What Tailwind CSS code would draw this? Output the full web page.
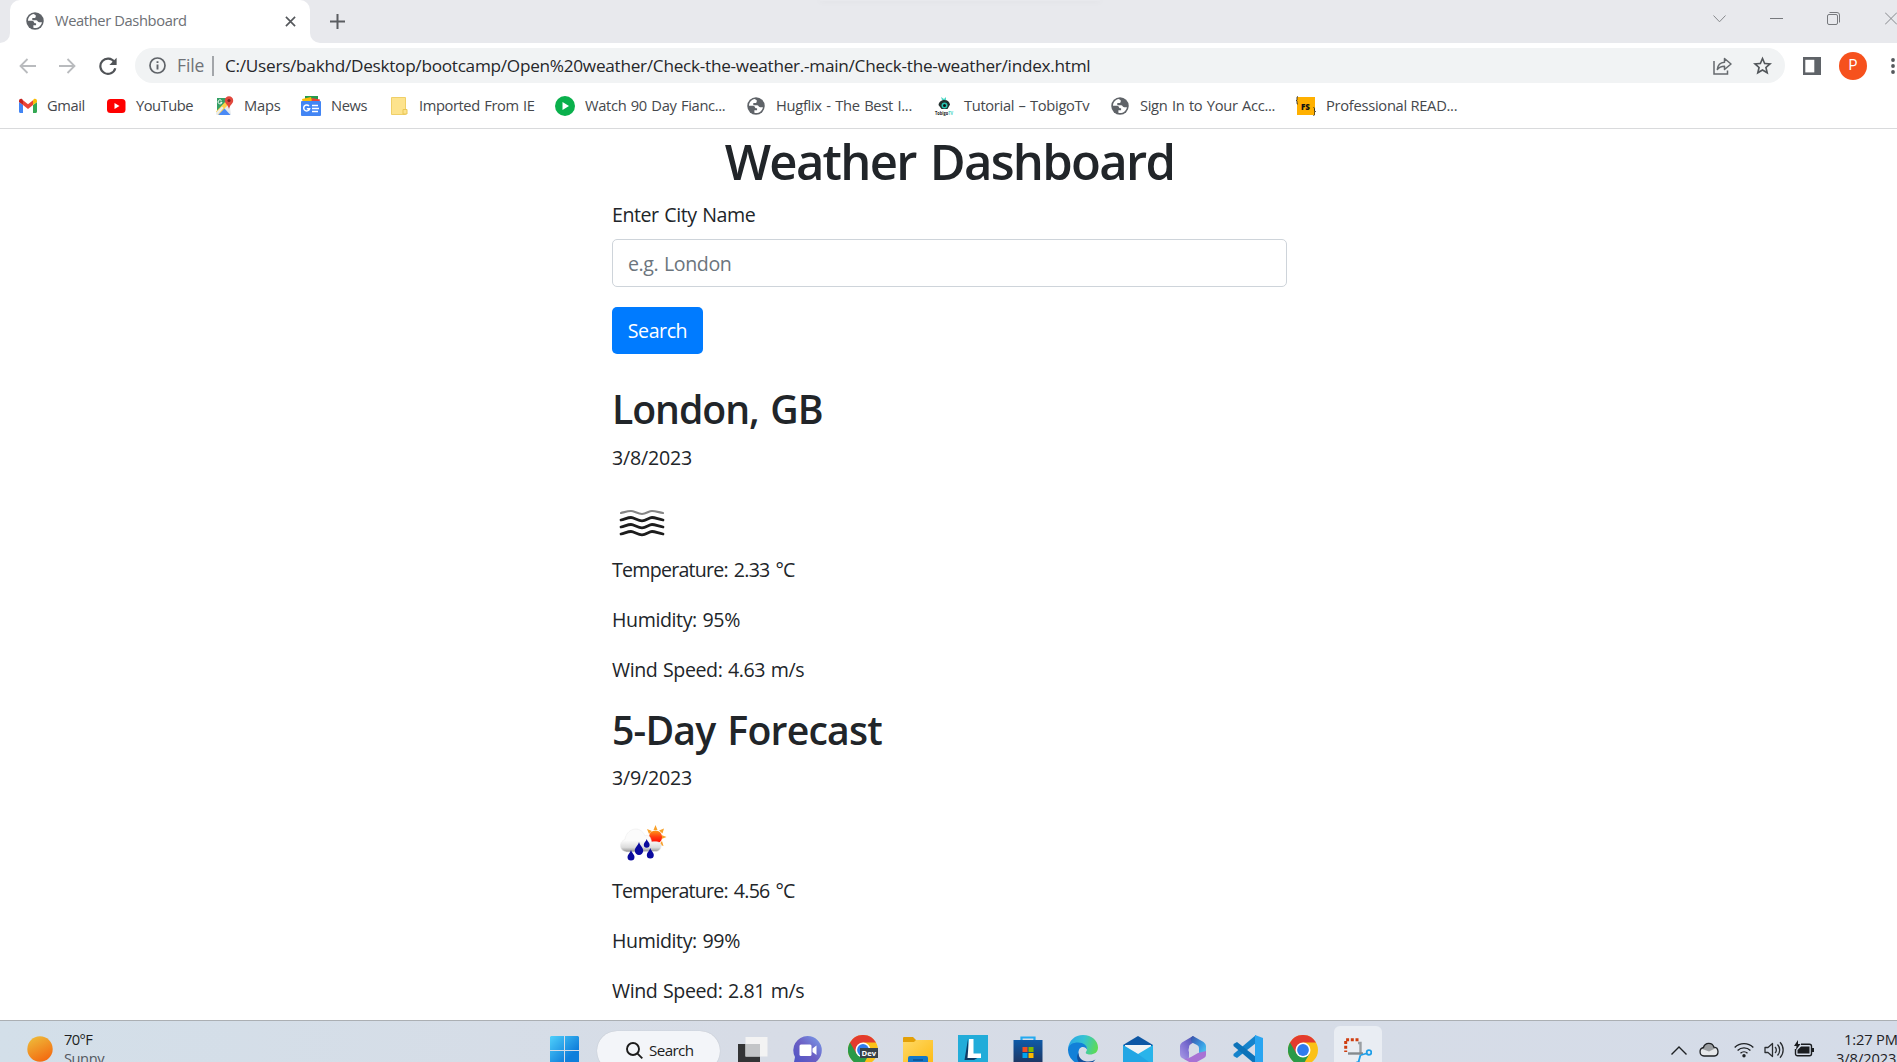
<!DOCTYPE html>
<html lang="en">
<head>
<meta charset="utf-8">
<title>Weather Dashboard</title>
<script src="https://cdn.jsdelivr.net/npm/@tailwindcss/browser@4"></script>
</head>
<body class="w-[1897px] h-[1062px] overflow-hidden bg-white font-['Open_Sans','Noto_Sans',sans-serif] text-[#212529] flex flex-col whitespace-nowrap">

<svg class="hidden">
  <defs>
    <symbol id="globe" viewBox="0 0 20 20">
      <circle cx="10" cy="10" r="9.700" fill="#5f6368"/>
      <path d="M8.600 2.300C5 3 2.300 6 2.200 9.600h4.400c1.300 0 2.300.9 2.400 2.100.1.500.4.800.9.800h1.300v2.300H8.200v2.800c4.600 1 8.900-2 9.500-6.300H14.600c-.9 0-1.500-.5-1.800-1.300-.3-.7-.8-.9-1.500-.9H7V6.600h2.100c.9 0 1.600-.5 1.700-1.400V3.500z" fill="#fff"/>
    </symbol>
    <symbol id="chrome" viewBox="0 0 30 30">
      <circle cx="15" cy="15" r="15" fill="#fbc116"/>
      <path d="M15 15 2 7.500A15 15 0 0 0 15 30l6.500-11.200z" fill="#2a9a48"/>
      <path d="M2 7.500A15 15 0 0 1 28 7.500H15L8.500 18.700z" fill="#e33b2e"/>
      <circle cx="15" cy="15" r="7.500" fill="#fff"/>
      <circle cx="15" cy="15" r="5.900" fill="#2f7bed"/>
    </symbol>
  </defs>
</svg>

<header class="h-[129px] shrink-0 border-b border-[#d9dadc] flex flex-col">
  <!-- Tab strip -->
  <div class="relative h-[43px] bg-[#e8e9ed] flex items-start">
    <div class="absolute left-[820px] top-0 w-[280px] h-px shadow-[0_0_6px_1px_rgba(0,0,0,0.04)]"></div>
    <div class="w-[10px] h-[43px] bg-white"><div class="size-full bg-[#e8e9ed] rounded-br-[10px]"></div></div>
    <div class="w-[300px] h-[43px] bg-white rounded-t-[10px] flex items-center pl-4 pr-[14px] pb-[1px]">
      <svg class="size-[18px]"><use href="#globe"/></svg>
      <span class="ml-[11px] pb-[2px] grow text-[14.700px] tracking-[-0.375px] text-[#6d7075]">Weather Dashboard</span>
      <svg class="size-[11px]" viewBox="0 0 12 12" stroke="#55585c" stroke-width="1.800"><path d="M1 1l10 10M11 1L1 11"/></svg>
    </div>
    <div class="w-[10px] h-[43px] bg-white"><div class="size-full bg-[#e8e9ed] rounded-bl-[10px]"></div></div>
    <svg class="ml-[10px] mt-[14px] size-[15px]" viewBox="0 0 15 15" stroke="#5a5d61" stroke-width="2"><path d="M7.500 0v15M0 7.500h15"/></svg>
    <div class="ml-auto flex items-start">
      <svg class="mt-[15px] mr-[44px] w-[13px] h-2" viewBox="0 0 13 8" fill="none" stroke="#86888c"><path d="M.5.5l6 6.300 6-6.300"/></svg>
      <svg class="mt-[18px] mr-[44px] w-[13px] h-px" viewBox="0 0 13 1"><path d="M0 0h13v1H0z" fill="#77797d"/></svg>
      <svg class="mt-3 mr-[45px] size-[13px]" viewBox="0 0 13 13" fill="none" stroke="#77797d"><rect x=".5" y="2.500" width="10" height="10" rx="1.500"/><path d="M2.500.5h7.500a2.500 2.500 0 0 1 2.500 2.500v7.500"/></svg>
      <svg class="mt-3 w-3 h-[13px]" viewBox="0 0 12 13" stroke="#86888c"><path d="M0 .5l12 12M0 12.500l12-12"/></svg>
    </div>
  </div>

  <!-- Toolbar -->
  <div class="mt-[5px] h-[35px] flex items-center">
    <svg class="ml-[19px] w-[17px] h-4" viewBox="0 0 17 16" fill="none" stroke="#b9bbbe" stroke-width="1.800"><path d="M17 8H1.500M8.500 1L1.500 8l7 7"/></svg>
    <svg class="ml-[23px] w-[17px] h-4" viewBox="0 0 17 16" fill="none" stroke="#b9bbbe" stroke-width="1.800"><path d="M0 8h15.500M8.500 1l7 7-7 7"/></svg>
    <svg class="ml-[23px] size-[18px]" viewBox="0 0 18 18" fill="none" stroke="#505357" stroke-width="2.200"><path d="M15.300 5A7.600 7.600 0 1 0 16.300 11.200"/><path d="M17.600.8v7.200h-7.200z" fill="#505357" stroke="none"/></svg>
    <div class="ml-[18px] w-[1650px] h-[35px] rounded-full bg-[#f1f3f4] flex items-center">
      <svg class="ml-[14px] size-[17px]" viewBox="0 0 17 17" fill="none" stroke="#5f6368" stroke-width="1.700"><circle cx="8.500" cy="8.500" r="7.500"/><path d="M8.500 7.500v5M8.500 4.200v1.900" stroke-width="1.900"/></svg>
      <span class="ml-[11px] w-[35px] text-[17.500px] tracking-[-0.12px] text-[#6f7277]">File</span>
      <span class="w-[2px] h-[20px] bg-[#a3a6aa]"></span>
      <span class="ml-[11px] text-[17.200px] tracking-[-0.27px] text-[#26272a]">C:/Users/bakhd/Desktop/bootcamp/Open%20weather/Check-the-weather.-main/Check-the-weather/index.html</span>
      <svg class="ml-auto w-[19px] h-[18px]" viewBox="0 0 19 18" fill="none" stroke="#65696d" stroke-width="1.500"><path d="M1 4v13h13.500v-3.500"/><path d="M4.300 12.500c.4-4.500 3-7 7.200-7.300V1.500L18 7l-6.500 5.500V9.200c-3.200 0-5.500.9-7.200 3.300z" stroke-linejoin="round"/></svg>
      <svg class="ml-[21px] mr-[13px] size-[19px]" viewBox="0 0 24 24"><path fill="#53575b" d="M24 9.200l-8.600-.7L12 .5 8.600 8.500 0 9.200l6.500 5.700-2 8.400L12 18.900l7.500 4.400-2-8.400zM12 16.400l-4.300 2.600 1.100-4.900L5 10.800l5-.4 2-4.700 2 4.700 5 .4-3.800 3.300 1.100 4.900z"/></svg>
    </div>
    <svg class="ml-[18px] size-[18px]" viewBox="0 0 18 18"><path d="M0 0h18v18H0z" fill="#5f6368"/><path d="M2.300 2.800h9v12.600h-9z" fill="#fff"/></svg>
    <span class="ml-[18px] size-7 rounded-full bg-[#f6511d] text-white text-[14px] font-['Roboto'] flex items-center justify-center">P</span>
    <svg class="ml-[24px] w-1 h-4" viewBox="0 0 4 16" fill="#55585c"><circle cx="2" cy="2" r="1.900"/><circle cx="2" cy="8" r="1.900"/><circle cx="2" cy="14" r="1.900"/></svg>
  </div>

  <!-- Bookmarks -->
  <nav class="mt-[13px] h-5 pl-[18px] flex text-[14.700px] leading-[18px] text-[#45484c]">
    <a class="w-[89px] flex gap-[9px]"><svg class="size-5 shrink-0" viewBox="0 0 20 20"><path d="M1 6v9.500c0 .8.600 1.500 1.400 1.500H5V9z" fill="#4285f4"/><path d="M19 6v9.500c0 .8-.6 1.500-1.400 1.500H15V9z" fill="#34a853"/><path d="M15 4.300V9l4-3V4.700c0-1.600-1.800-2.500-3.100-1.600z" fill="#fbbc04"/><path d="M5 9V4.300l5 3.900 5-3.900V9l-5 4z" fill="#ea4335"/><path d="M1 4.700V6l4 3V4.300L4.100 3.100C2.800 2.200 1 3.100 1 4.700z" fill="#c5221f"/></svg><span class="tracking-[-0.4px]">Gmail</span></a>
    <a class="w-[107px] flex gap-[9px]"><svg class="size-5 shrink-0" viewBox="0 0 20 20"><rect x="0" y="3" width="18.500" height="14" rx="3.500" fill="#f00"/><path d="M7.500 7l5 3-5 3z" fill="#fff"/></svg><span class="tracking-[-0.5px]">YouTube</span></a>
    <a class="w-[87px] flex gap-[10px]"><svg class="size-5 shrink-0" viewBox="0 0 20 20"><path d="M3 2h13v15L3 18z" fill="#34a065"/><path d="M2 18.500L15 5l2 13.500z" fill="#e6eaec"/><path d="M4 19l6-7 6.500 7z" fill="#4a8af5"/><path d="M2 15.500L13 4l3 3L4 19z" fill="#fdd04a"/><path d="M2 16.500V18l1.500 1L9.500 12 8 10.500z" fill="#e9ecee"/><path d="M15 .3a4.200 4.200 0 0 0-4.200 4.200c0 3.300 3.500 4.300 4.200 8.600.7-4.300 4.200-5.300 4.200-8.600A4.200 4.200 0 0 0 15 .3z" fill="#e2483d"/><circle cx="15" cy="4.500" r="1.600" fill="#7c211c"/><path d="M7.500 4.500A2 2 0 1 0 8 6.300H6.300" fill="none" stroke="#fff" stroke-width="1"/></svg><span class="tracking-[-0.2px]">Maps</span></a>
    <a class="w-[87px] flex gap-[10px]"><svg class="size-5 shrink-0" viewBox="0 0 20 20"><path d="M4 0h13v7H4z" fill="#249b4c"/><path d="M1 3l9-2 2 6H2z" fill="#fbbc04"/><path d="M11 2l8 1.500L18 8h-8z" fill="#ea4335"/><rect y="5" width="20" height="15" rx="1" fill="#4285f4"/><path d="M8 10a3 3 0 1 0 .6 2.700H5.800" fill="none" stroke="#fff" stroke-width="1.500"/><path d="M11 9.500h6M11 12.500h7M11 15.500h6" stroke="#fff" stroke-width="1.500"/></svg><span class="tracking-[-0.4px]">News</span></a>
    <a class="w-[167px] flex gap-[11px]"><svg class="size-5 shrink-0" viewBox="0 0 20 20"><path d="M3.500 1.500h14v17h-14z" fill="#fde38d" stroke="#efcf68"/><path d="M15 13.500h4v4.500h-4z" fill="#fde38d" stroke="#e9c655"/></svg><span class="tracking-[-0.4px] [word-spacing:1px]">Imported From IE</span></a>
    <a class="w-[191px] flex gap-[10px]"><svg class="size-5 shrink-0" viewBox="0 0 20 20"><circle cx="10" cy="10" r="10" fill="#0ab04c"/><path d="M7.500 6l6.500 4-6.500 4z" fill="#fff"/></svg><span class="tracking-[-0.34px] [word-spacing:1px]">Watch 90 Day Fianc...</span></a>
    <a class="w-[188px] flex gap-[10px]"><svg class="size-5 shrink-0 p-px"><use href="#globe" width="18" height="18"/></svg><span class="tracking-[-0.3px] [word-spacing:1px]">Hugflix - The Best I...</span></a>
    <a class="w-[176px] flex gap-[10px]"><svg class="size-5 shrink-0" viewBox="0 0 20 20"><path d="M7 1l3 2 2-2v3H8z" fill="#4fd6c4"/><path d="M4.500 9C5 5.500 7.500 4 10.500 4s5 2 5.500 4.500L13.500 13h-6z" fill="#23302f"/><circle cx="10.500" cy="9.500" r="3" fill="#28c6b4"/><circle cx="10.500" cy="9.500" r="1.500" fill="#111"/><text x="1" y="18.500" font-size="6" font-weight="700" textLength="18" lengthAdjust="spacingAndGlyphs" fill="#222">Tobigo<tspan fill="#3fd3c2">TV</tspan></text></svg><span class="tracking-[-0.33px] [word-spacing:1px]">Tutorial – TobigoTv</span></a>
    <a class="w-[186px] flex gap-[10px]"><svg class="size-5 shrink-0 p-px"><use href="#globe" width="18" height="18"/></svg><span class="tracking-[-0.32px] [word-spacing:1px]">Sign In to Your Acc...</span></a>
    <a class="flex gap-[10px]"><svg class="size-5 shrink-0" viewBox="0 0 20 20"><path d="M1 1h18v18H1z" fill="#ffb000"/><text x="5" y="13.500" font-size="8.500" font-weight="800" textLength="9" lengthAdjust="spacingAndGlyphs" fill="#111">FS</text><path d="M2 .5C.8.500 1 2 1 3s0 1.500-1 1.500C1 4.500 1 5 1 6.500S1 8 2 8M17.500 11.500c1.200 0 1 1 1 2.500s0 1.500 1 1.500c-1 0-1 .5-1 2s0 2-1 2" fill="none" stroke="#222" stroke-width=".9"/></svg><span class="tracking-[-0.28px]">Professional READ...</span></a>
  </nav>
</header>

<!-- Page -->
<main class="h-[891px] shrink-0 overflow-hidden pl-[612px] text-[19.600px] leading-[30px]">
  <div class="w-[675px]">
    <h1 class="pt-[2px] text-[49px] leading-[60px] font-semibold tracking-[-1.700px] [word-spacing:3px] text-center mb-[9px]">Weather Dashboard</h1>
    <label class="block mb-[9px] tracking-[-0.45px] [word-spacing:1px]">Enter City Name</label>
    <div class="h-12 mb-5 border border-[#ced4da] rounded-[5px] px-[15px] pt-[2px] flex items-center text-[#6c757d] tracking-[-0.4px] [word-spacing:1px]">e.g. London</div>
    <button class="block w-[91px] h-[47px] mb-[31px] rounded-[5px] bg-[#007bff] text-white tracking-[-0.45px]">Search</button>

    <h2 class="text-[39.200px] leading-[48px] font-semibold tracking-[-1.050px] [word-spacing:2.500px] mb-[10px]">London, GB</h2>
    <p class="mb-5 tracking-[-0.2px]">3/8/2023</p>
    <svg class="block size-[62px]" viewBox="0 0 62 62" fill="none" stroke="#1c1c1c" stroke-width="2.800" stroke-linecap="round">
      <path stroke="#858585" stroke-width="2.200" d="M9 20c4-1 7-2 10-2s7 3 11 3 7-3 10-3 6 1 11 2"/>
      <path d="M9 27c4-1 7-2.500 10-2.500s7 3.300 11 3.300 7-3.300 10-3.300 6 1.500 11 2.500"/>
      <path d="M9 34c4-1 7-2.500 10-2.500s7 3.300 11 3.300 7-3.300 10-3.300 6 1.500 11 2.500"/>
      <path d="M9 41c4-1 7-2.500 10-2.500s7 3.300 11 3.300 7-3.300 10-3.300 6 1.500 11 2.500"/>
    </svg>
    <p class="mb-5 tracking-[-0.75px] [word-spacing:1.500px]">Temperature: 2.33 °C</p>
    <p class="mb-5 tracking-[-0.4px] [word-spacing:1px]">Humidity: 95%</p>
    <p class="mb-5 tracking-[-0.42px] [word-spacing:1px]">Wind Speed: 4.63 m/s</p>

    <h2 class="pt-px -mb-px text-[39.200px] leading-[48px] font-semibold tracking-[-0.8px] [word-spacing:2.500px]">5-Day Forecast</h2>
    <p class="mt-[10px] mb-5 tracking-[-0.2px]">3/9/2023</p>
    <svg class="block w-[62px] h-[63px]" viewBox="0 0 62 63">
      <defs>
        <linearGradient id="cl" x1="0" y1="0" x2="0" y2="1"><stop offset=".5" stop-color="#fbfbfb"/><stop offset=".8" stop-color="#dcdcdc"/><stop offset="1" stop-color="#8f8f8f"/></linearGradient>
        <linearGradient id="sn" x1="0" y1="0" x2="0" y2="1"><stop offset="0" stop-color="#ff9a1a"/><stop offset=".5" stop-color="#ff3a10"/><stop offset="1" stop-color="#f00"/></linearGradient>
      </defs>
      <path d="M43.500 12l2 5h-4zM35 16l5 2-3 3zM52 15.500l-1.500 5-3.500-3zM54.500 24l-5-2v4zM51.500 33l-1.500-5-3 3.500z" fill="#f8a12b"/>
      <circle cx="43.500" cy="24" r="6.600" fill="url(#sn)"/>
      <path d="M16 39c-9 0-10-10-3-12.500C14 16 28 11 33 23c3-2 6 1 6.500 6 7-1 11 1 9.500 5-1 3.500-3 4.500-6 4.500z" fill="url(#cl)" stroke="#ececec" stroke-width=".6"/>
      <g fill="#0a0a9e">
        <path d="M27 29c-1 3.500-4.200 5.500-4.200 8.700a4.200 4.200 0 0 0 8.400 0C31.200 34.500 28 32.500 27 29z"/>
        <path d="M34.700 26c-.7 2.500-2.900 3.700-2.900 5.800a2.900 2.900 0 0 0 5.800 0c0-2.100-2.200-3.300-2.900-5.800z"/>
        <path d="M19 37c-.8 3-3.500 4.500-3.500 7a3.500 3.500 0 0 0 7 0c0-2.500-2.700-4-3.500-7z"/>
        <path d="M38.300 35c-.8 3-3.500 4.500-3.500 7a3.500 3.500 0 0 0 7 0c0-2.500-2.700-4-3.500-7z"/>
      </g>
    </svg>
    <p class="mb-5 tracking-[-0.75px] [word-spacing:1.500px]">Temperature: 4.56 °C</p>
    <p class="mb-5 tracking-[-0.4px] [word-spacing:1px]">Humidity: 99%</p>
    <p class="tracking-[-0.42px] [word-spacing:1px]">Wind Speed: 2.81 m/s</p>
  </div>
</main>

<!-- Taskbar -->
<footer class="h-[42px] shrink-0 overflow-hidden border-t border-[#abafb3] bg-linear-to-r from-[#d3dfe9] via-[#d7dce6] via-40% to-[#d5dce8] flex items-start text-[14.700px]">
  <svg class="ml-[27px] mt-[15px] size-[26px] shrink-0" viewBox="0 0 26 26"><defs><linearGradient id="sun" x1=".2" y1="0" x2=".7" y2="1"><stop offset="0" stop-color="#eebb3a"/><stop offset="1" stop-color="#f4680f"/></linearGradient></defs><circle cx="13" cy="13" r="12.700" fill="url(#sun)"/></svg>
  <div class="ml-[11px] mt-2 w-[486px] shrink-0 leading-5">
    <div class="tracking-[-0.65px] text-[#1d1f22]">70°F</div>
    <div class="-mt-px tracking-[-0.48px] text-[#55595f]">Sunny</div>
  </div>
  <svg class="mt-[15px] size-[29px] shrink-0" viewBox="0 0 29 29"><defs><linearGradient id="win" x1="0" y1="0" x2="1" y2="1"><stop offset="0" stop-color="#4fd0fb"/><stop offset=".7" stop-color="#0f7fdb"/></linearGradient></defs><path d="M1 0h13v14H0V1zM15 0h13l1 1v13H15zM0 15h14v14H0zM15 15h14v14H15z" fill="url(#win)"/></svg>
  <div class="ml-[18px] mt-[10px] w-[123px] h-10 shrink-0 rounded-full bg-[#f3f5f9] shadow-[0_0_1px_rgba(0,0,0,0.2)] flex items-center pl-[29px] pb-[2px]">
    <svg class="size-[17px] shrink-0" viewBox="0 0 17 17" fill="none" stroke="#1c1c1c" stroke-width="1.900"><circle cx="7" cy="7" r="6"/><path d="M11.300 11.300l5 5"/></svg>
    <span class="ml-[6px] text-[15.200px] tracking-[-0.6px] text-[#1c1c1c]">Search</span>
  </div>
  <div class="ml-[5px] flex items-start mt-[14px]">
    <div class="w-[55px] flex justify-center shrink-0"><svg class="size-[30px]" viewBox="0 0 30 30"><path d="M0 9h22v21H0z" fill="#333435"/><path d="M7.500 2h22v19.500h-22z" fill="#f3f3f3"/><path d="M7.500 9H22v12.500H7.500z" fill="#c3c5c7"/></svg></div>
    <div class="w-[55px] flex justify-center shrink-0"><svg class="size-[30px]" viewBox="0 0 30 30"><defs><linearGradient id="chat" x1="1" y1="0" x2="0" y2="1"><stop offset="0" stop-color="#7aa0ec"/><stop offset=".5" stop-color="#6c5fc4"/><stop offset="1" stop-color="#4b53c6"/></linearGradient></defs><path d="M14.500 1a14.300 14.300 0 0 1 0 28.600H.5L2 22.100A14.300 14.300 0 0 1 14.500 1z" fill="url(#chat)"/><rect x="6.500" y="9.500" width="12" height="11.500" rx="1.500" fill="#fff"/><path d="M19.500 13.500l4-3v9.500l-4-3z" fill="#fff"/></svg></div>
    <div class="w-[55px] flex justify-center shrink-0"><svg class="size-[30px]" viewBox="0 0 30 30"><use href="#chrome"/><path d="M12 13h18v10H12z" fill="#37424a"/><text x="13.500" y="20.700" font-size="7.500" font-weight="700" textLength="14.500" lengthAdjust="spacingAndGlyphs" fill="#fff">Dev</text></svg></div>
    <div class="w-[55px] flex justify-center shrink-0"><svg class="size-[30px]" viewBox="0 0 30 30"><path d="M0 3q0-1 1-1h9l3 3v4H0z" fill="#e3a008"/><defs><linearGradient id="fold" x1="0" y1="0" x2="1" y2="1"><stop offset="0" stop-color="#ffd966"/><stop offset="1" stop-color="#fdba12"/></linearGradient></defs><path d="M0 7h11l2-2h17v25H0z" fill="url(#fold)"/><path d="M5 30v-7q0-2 2-2h16q2 0 2 2v7z" fill="#1478c8"/><path d="M10 25h10" stroke="#0b4f91" stroke-width="1.500"/></svg></div>
    <div class="w-[55px] flex justify-center shrink-0"><svg class="size-[30px]" viewBox="0 0 30 30"><path d="M0 0h30v30H0z" fill="#22acd9"/><path d="M10 4L6.500 25H16l5-3-10-2z" fill="#0e3a66"/><path d="M11 4h4.500v14.500H23V23H9.500z" fill="#fff"/></svg></div>
    <div class="w-[55px] flex justify-center shrink-0"><svg class="size-[30px]" viewBox="0 0 30 30"><path d="M8.500 7V2.500h13V7" fill="none" stroke="#25aaf0" stroke-width="2.200"/><defs><linearGradient id="store" x1="0" y1="0" x2="0" y2="1"><stop offset="0" stop-color="#0e5aa8"/><stop offset="1" stop-color="#20335c"/></linearGradient></defs><path d="M.5 5h29v25H.5z" fill="url(#store)"/><path d="M9.500 12h5v5h-5z" fill="#f25022"/><path d="M15.500 12h5v5h-5z" fill="#7fba00"/><path d="M9.500 18h5v5h-5z" fill="#00a4ef"/><path d="M15.500 18h5v5h-5z" fill="#ffb900"/></svg></div>
    <div class="w-[55px] flex justify-center shrink-0"><svg class="size-[30px]" viewBox="0 0 30 30"><defs><linearGradient id="e1" x1="0" y1=".3" x2="1" y2=".5"><stop offset="0" stop-color="#2aa5e8"/><stop offset=".5" stop-color="#35c3d2"/><stop offset="1" stop-color="#5ddb55"/></linearGradient></defs><path d="M0 14C1 5 7 0 15 0c9 0 15 6 15 12.500 0 5-4 7-8 7-3 0-5-1-4-2.500 3-4-1-8-6-8C6 9 1 11 0 14z" fill="url(#e1)"/><path d="M0 14C1 9.500 5 7.500 10 7.500c6 0 9.500 3.500 9 7-1-2-3.500-3-6-2-4 1.500-3.500 13 3 17A15 15 0 0 1 0 14z" fill="#1280d8"/><path d="M10.500 18c0 6 5 8.500 10 8.500 3 0 5-1 7-2-3 4-7 5.500-12 5.500-6-1-8-8-5-12z" fill="#114f9c"/></svg></div>
    <div class="w-[55px] flex justify-center shrink-0"><svg class="size-[30px]" viewBox="0 0 30 30"><path d="M0 10L15 1l15 9v5H0z" fill="#0d57a4"/><path d="M2 10h26v9L15 24 2 19z" fill="#f1f3f5"/><path d="M0 10l15 9 15-9v20H0z" fill="#29b4ea"/><path d="M0 10l15 9L30 30H0z" fill="#1a95dd" opacity=".45"/></svg></div>
    <div class="w-[55px] flex justify-center shrink-0"><svg class="size-[30px]" viewBox="0 0 30 30"><defs><linearGradient id="m1" x1="1" y1="0" x2="0" y2="1"><stop offset="0" stop-color="#3c4ea6"/><stop offset=".5" stop-color="#7a6cd0"/><stop offset="1" stop-color="#a99be6"/></linearGradient><linearGradient id="m2" x1="0" y1="0" x2="1" y2="1"><stop offset="0" stop-color="#3b4fa8"/><stop offset=".6" stop-color="#3a9fe4"/><stop offset="1" stop-color="#5cd3f2"/></linearGradient></defs><path d="M15 1L4 7.500Q2 9 2 11v8q0 3 3 4.500 4 2 6-1V12q0-2 2-3l5-3z" fill="url(#m1)"/><path d="M15 1l10.500 6Q28 9 28 11v9l-7 1v-8q0-2-2-3l-5-2.500q-2-2-1-5z" fill="url(#m2)"/><path d="M28 16v4q0 2-2 3l-9 5q-2 1-4 0l-8-4.500q4 1 8-1.500l7-4z" fill="#a872d4"/><circle cx="15" cy="15" r="4.500" fill="#d7dce6"/></svg></div>
    <div class="w-[55px] flex justify-center shrink-0"><svg class="size-[30px]" viewBox="0 0 30 30"><path d="M23 0v8L4 23l-3.500-2v-2z" fill="#1583cb"/><path d="M23 30v-8L4 7 .5 9v2z" fill="#0d73b9"/><path d="M22 0l8 3v24l-8 3z" fill="#29a5f1"/></svg></div>
    <div class="w-[55px] flex justify-center shrink-0"><svg class="size-[30px]" viewBox="0 0 30 30"><use href="#chrome"/></svg></div>
    <div class="w-[48px] h-[50px] ml-[4px] -mt-[9px] rounded-[6px] bg-[#e9edf3] shrink-0 flex justify-center pt-3"><svg class="size-[28px]" viewBox="0 0 28 28"><path d="M14 5h2.500v11.500" fill="none" stroke="#9a9fa3" stroke-width="2.400"/><path d="M4 15.500h15" stroke="#858a8e" stroke-width="2.400"/><path d="M14.500 1.700H1.700V14" fill="none" stroke="#cf3e10" stroke-width="3" stroke-dasharray="3 1.700"/><g fill="none" stroke="#1f9fe8" stroke-width="1.800"><circle cx="25" cy="14.500" r="2.300"/><path d="M22.500 15.500L17 17M16.500 17l-2 7"/><circle cx="14" cy="26.500" r="2.300"/></g></svg></div>
  </div>

  <div class="ml-auto flex items-start shrink-0">
    <svg class="mt-[25px] w-4 h-[9px]" viewBox="0 0 16 9" fill="none" stroke="#1f2225" stroke-width="1.400"><path d="M.5 8.500L8 1l7.500 7.500"/></svg>
    <svg class="ml-3 mt-[21px] w-5 h-[15px]" viewBox="0 0 20 15"><path d="M5 14a4.300 4.300 0 0 1-.5-8.500C6 0 13.500.2 14.800 5.200c5.500.3 5.500 8.300.5 8.800z" fill="#e6e8ea"/><path d="M2 6.500C5 5 5.500 1 10 1s5 4 7 5l-7 3.500z" fill="#9a9da0"/><path d="M5 14a4.300 4.300 0 0 1-.5-8.500C6 0 13.500.2 14.800 5.200c5.500.3 5.500 8.300.5 8.800z" fill="none" stroke="#1f2225" stroke-width="1.300"/></svg>
    <svg class="ml-[15px] mt-[21px] w-5 h-4" viewBox="0 0 20 16" fill="none" stroke="#1f2225" stroke-width="1.400"><path d="M.7 5.500a13 13 0 0 1 18.600 0M3.600 8.500a9 9 0 0 1 12.800 0M6.500 11.300a5 5 0 0 1 7 0"/><circle cx="10" cy="13.800" r="1.700" fill="#1f2225" stroke="none"/></svg>
    <svg class="ml-[10px] mt-[20px] w-5 h-[18px]" viewBox="0 0 20 18" fill="none" stroke="#2a2d30" stroke-width="1.300"><path d="M1 6.500h3l4.500-4v13l-4.500-4H1z" stroke-linejoin="round"/><path d="M11 6a4 4 0 0 1 0 6M13.500 3.500a8 8 0 0 1 0 11M16 1.300a11 11 0 0 1 0 15.400"/></svg>
    <svg class="ml-[10px] mt-[19px] w-5 h-[18px]" viewBox="0 0 20 18"><path d="M7 4.200h8.500a2 2 0 0 1 2 2v7.600a2 2 0 0 1-2 2H3.500a2 2 0 0 1-2-2V9" fill="none" stroke="#1b1d20" stroke-width="1.400"/><path d="M7 6.500h8.500v7H3.500V10zM18 8h2v4h-2zM4 0L0 6h2.500L2 10l4.500-6H4z" fill="#1b1d20"/></svg>
    <div class="ml-[22px] mt-2 w-[61px] leading-5 text-[#1f2225]">
      <div class="pl-2 tracking-[-0.17px]">1:27 PM</div>
      <div class="-mt-px tracking-[-0.1px]">3/8/2023</div>
    </div>
  </div>
</footer>
</body>
</html>
